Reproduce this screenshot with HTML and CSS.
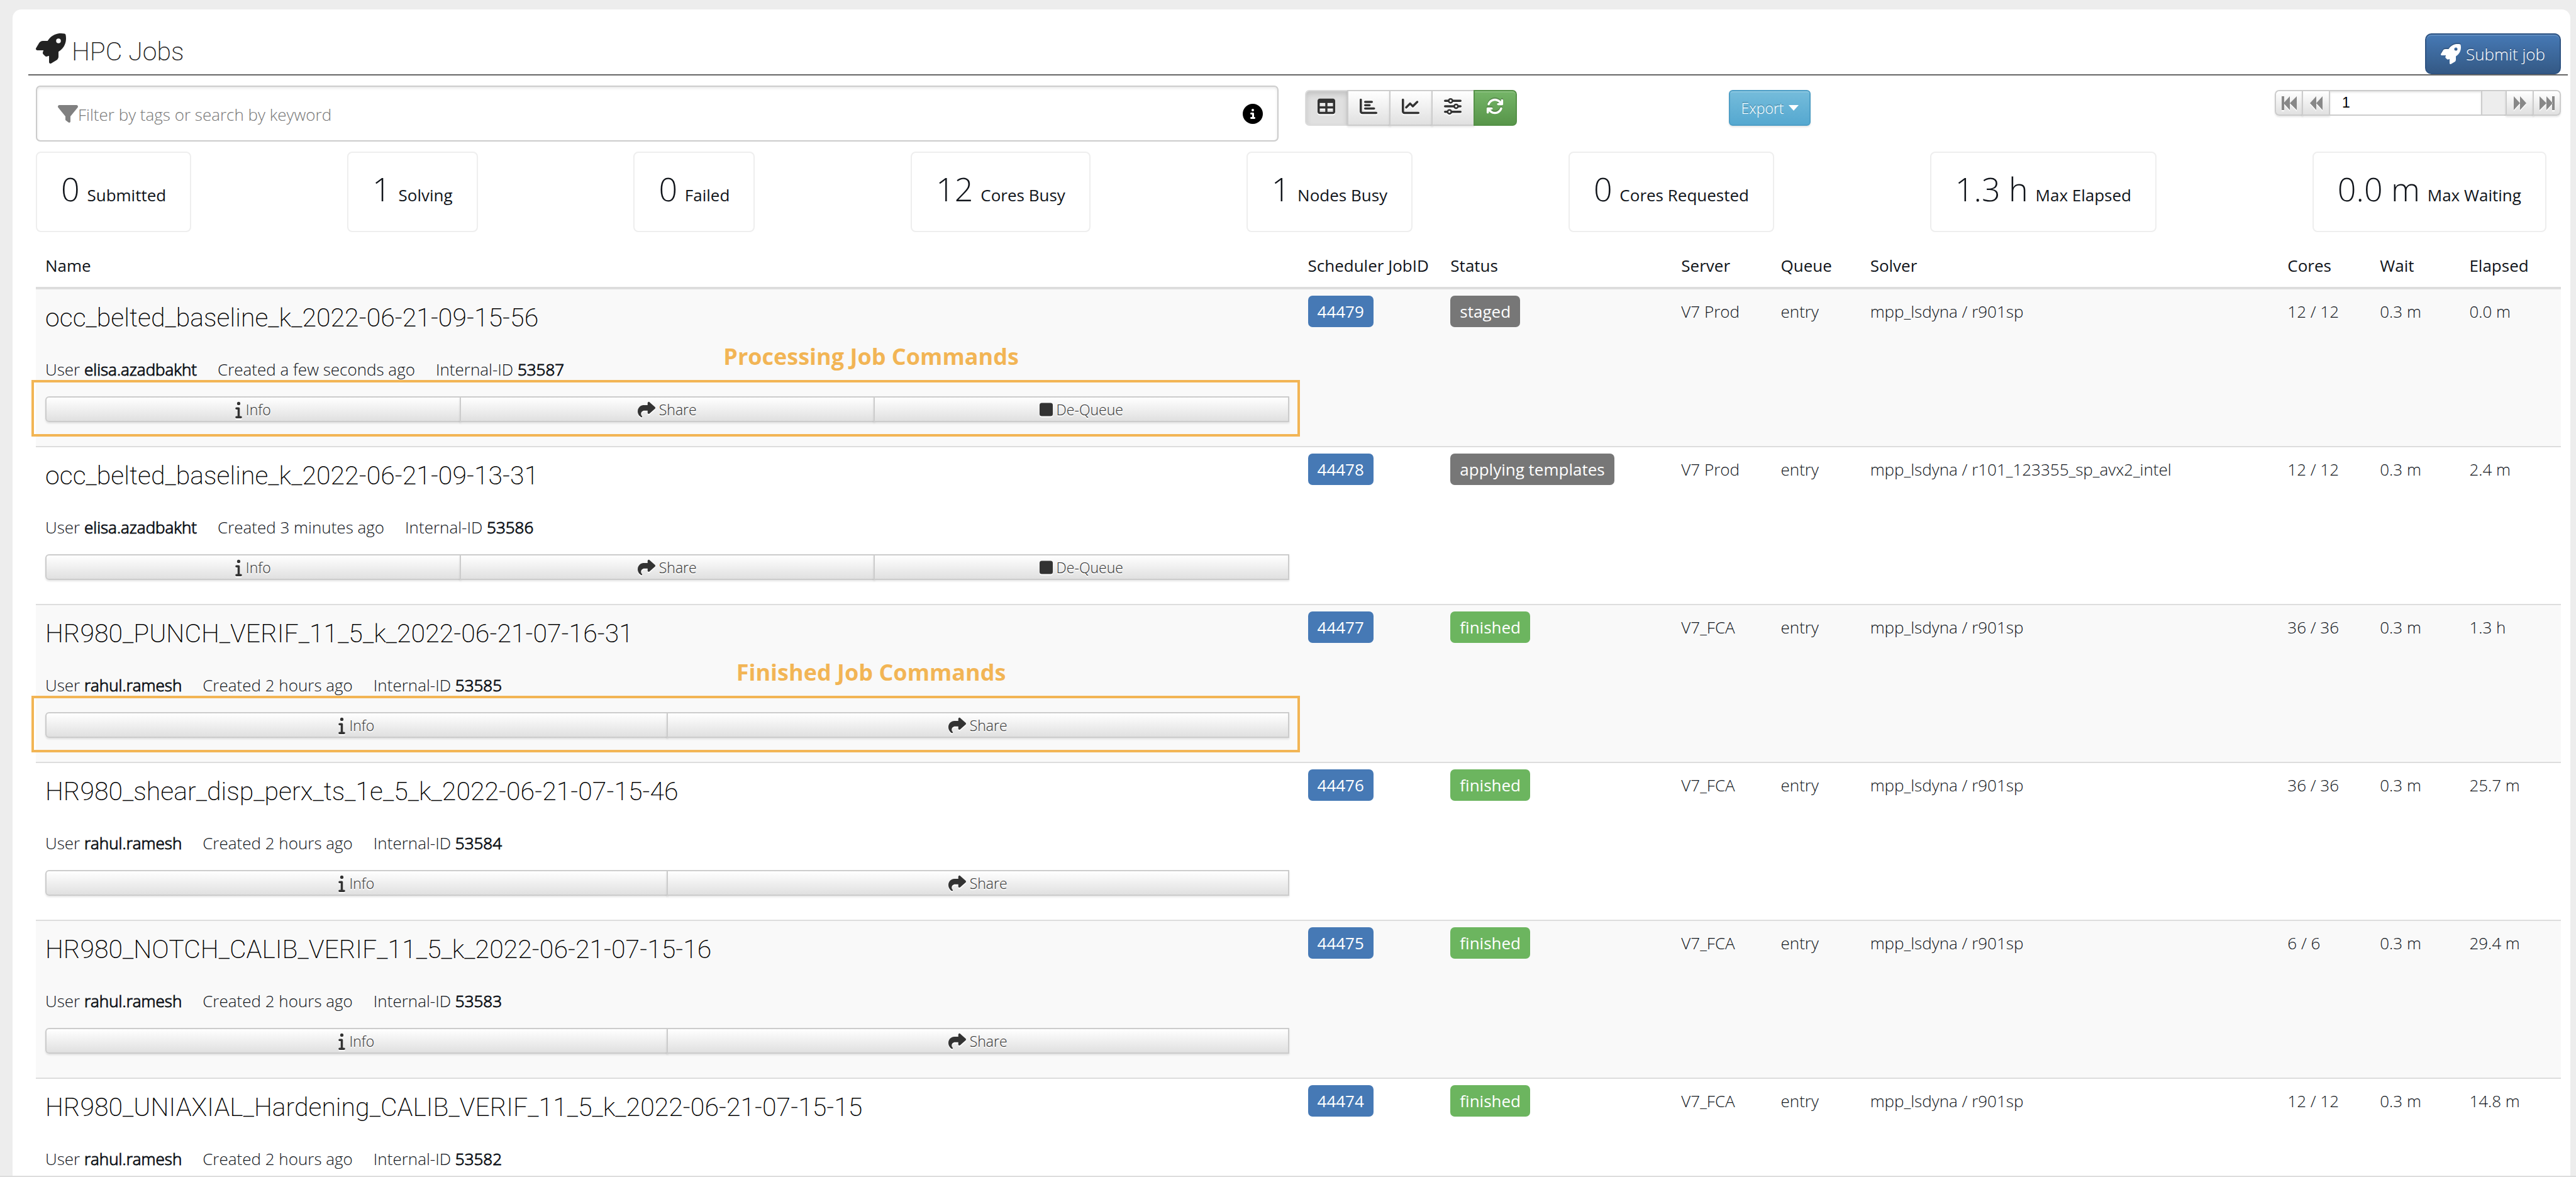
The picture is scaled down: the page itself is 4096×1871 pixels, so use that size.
FILE: index.html
```
<!DOCTYPE html>
<html lang="en">
<head>
  <meta charset="utf-8">
  <title>HPC Jobs</title>
  <link rel="stylesheet" href="styles.css">
</head>
<body>
  <!-- icon sprite -->
  <svg class="sprite" aria-hidden="true">
    <symbol id="rocket" viewBox="0 0 512 512"><path d="M156.600 384.900L125.700 354c-8.500-8.500-11.500-20.800-7.700-32.200c3-8.900 7-20.500 11.800-33.800L24 288c-8.600 0-16.600-4.600-20.900-12.100s-4.200-16.700 .2-24.100l52.500-88.500c13-21.900 36.500-35.300 61.900-35.300l82.300 0c2.400-4 4.800-7.700 7.200-11.300C289.100-4.100 411.100-8.100 483.900 5.300c11.600 2.100 20.600 11.200 22.800 22.800c13.400 72.900 9.300 194.800-111.400 276.700c-3.500 2.400-7.300 4.800-11.300 7.200v82.300c0 25.400-13.400 49-35.300 61.900l-88.500 52.500c-7.400 4.400-16.600 4.500-24.100 .2s-12.100-12.200-12.100-20.900V380.800c-14.100 4.900-26.400 8.900-35.700 11.900c-11.200 3.600-23.400 .5-31.800-7.800zM384 168a40 40 0 1 0 0-80 40 40 0 1 0 0 80z"/></symbol>
    <symbol id="filter" viewBox="0 0 512 512"><path d="M3.900 54.900C10.500 40.900 24.500 32 40 32H472c15.500 0 29.500 8.900 36.100 22.900s4.600 30.500-5.200 42.500L320 320.900V448c0 12.100-6.800 23.200-17.700 28.600s-23.800 4.300-33.500-3l-64-48c-8.100-6-12.800-15.500-12.800-25.600V320.900L9 97.300C-.7 85.400-2.800 68.800 3.900 54.900z"/></symbol>
    <symbol id="circle-info" viewBox="0 0 512 512"><path d="M256 512A256 256 0 1 0 256 0a256 256 0 1 0 0 512zM216 336h24V272H216c-13.300 0-24-10.700-24-24s10.700-24 24-24h48c13.300 0 24 10.700 24 24v88h8c13.300 0 24 10.700 24 24s-10.700 24-24 24H216c-13.300 0-24-10.700-24-24s10.700-24 24-24zm40-208a32 32 0 1 1 0 64 32 32 0 1 1 0-64z"/></symbol>
    <symbol id="table" viewBox="0 0 512 512"><path d="M64 256V160H224v96H64zm0 64H224v96H64V320zm224 96V320H448v96H288zM448 256H288V160H448v96zM64 32C28.700 32 0 60.700 0 96V416c0 35.300 28.700 64 64 64H448c35.300 0 64-28.700 64-64V96c0-35.300-28.700-64-64-64H64z"/></symbol>
    <symbol id="chart-bar" viewBox="0 0 512 512"><path d="M32 32c17.700 0 32 14.300 32 32V400c0 8.800 7.200 16 16 16H480c17.700 0 32 14.300 32 32s-14.300 32-32 32H80c-44.200 0-80-35.800-80-80V64C0 46.300 14.300 32 32 32zm96 96c0-17.700 14.300-32 32-32l192 0c17.700 0 32 14.300 32 32s-14.300 32-32 32H160c-17.700 0-32-14.300-32-32zm32 64H288c17.700 0 32 14.300 32 32s-14.300 32-32 32H160c-17.700 0-32-14.300-32-32s14.300-32 32-32zm0 96H416c17.700 0 32 14.300 32 32s-14.300 32-32 32H160c-17.700 0-32-14.300-32-32s14.300-32 32-32z"/></symbol>
    <symbol id="chart-line" viewBox="0 0 512 512"><path d="M64 64c0-17.700-14.300-32-32-32S0 46.300 0 64V400c0 44.200 35.800 80 80 80H480c17.700 0 32-14.300 32-32s-14.300-32-32-32H80c-8.800 0-16-7.200-16-16V64zm406.600 86.600c12.500-12.500 12.500-32.800 0-45.300s-32.800-12.500-45.300 0L320 210.700l-57.400-57.400c-12.500-12.500-32.800-12.500-45.300 0l-112 112c-12.500 12.500-12.500 32.800 0 45.300s32.800 12.500 45.300 0L240 221.300l57.400 57.400c12.500 12.500 32.800 12.500 45.300 0l128-128z"/></symbol>
    <symbol id="sliders" viewBox="0 0 512 512"><path d="M32 96H130M254 96H480M32 256H290M414 256H480M32 416H98M222 416H480" fill="none" stroke="currentColor" stroke-width="64" stroke-linecap="round"/><g fill="none" stroke="currentColor" stroke-width="48"><circle cx="192" cy="96" r="56"/><circle cx="352" cy="256" r="56"/><circle cx="160" cy="416" r="56"/></g></symbol>
    <symbol id="refresh" viewBox="0 0 512 512"><path d="M105.100 202.600c7.700-21.800 20.200-42.300 37.800-59.800c62.500-62.500 163.800-62.500 226.300 0L386.300 160H352c-17.700 0-32 14.300-32 32s14.300 32 32 32H463.900c17.700 0 32-14.300 32-32V80c0-17.700-14.300-32-32-32s-32 14.300-32 32v35.200L414.400 97.600c-87.500-87.500-229.300-87.500-316.800 0C73.200 122 55.600 150.700 44.800 181.400c-5.900 16.700 2.900 34.900 19.500 40.800s34.900-2.900 40.800-19.500zM39 289.300c-5 1.500-9.800 4.200-13.700 8.200c-4 4-6.700 8.800-8.100 14c-.3 1.200-.6 2.500-.8 3.800c-.3 1.700-.4 3.400-.4 5.100V432c0 17.700 14.300 32 32 32s32-14.300 32-32V396.900l17.600 17.500c87.500 87.400 229.300 87.400 316.700 0c24.400-24.400 42.100-53.100 52.900-83.700c5.900-16.700-2.900-34.900-19.500-40.800s-34.900 2.900-40.800 19.500c-7.700 21.800-20.200 42.300-37.800 59.800c-62.500 62.500-163.800 62.500-226.300 0L125.600 352H160c17.700 0 32-14.300 32-32s-14.300-32-32-32H48.400c-1.600 0-3.200 .1-4.800 .3s-3.100 .5-4.600 1z"/></symbol>
    <symbol id="caret" viewBox="0 0 16 10"><path d="M0 0H16L8 9z"/></symbol>
    <symbol id="first" viewBox="0 0 24 24"><path d="M0 1h4v22H0zM13 1v22L3 12zM24 1v22L13 12z"/></symbol>
    <symbol id="prev" viewBox="0 0 24 24"><path d="M12 1v22L2 12zM22 1v22L12 12z"/></symbol>
    <symbol id="next" viewBox="0 0 24 24"><path d="M2 1v22L12 12zM12 1v22L22 12z"/></symbol>
    <symbol id="last" viewBox="0 0 24 24"><path d="M20 1h4v22h-4zM11 1v22L21 12zM0 1v22L11 12z"/></symbol>
    <symbol id="info" viewBox="0 0 192 512"><path d="M48 80a48 48 0 1 1 96 0A48 48 0 1 1 48 80zM0 224c0-17.700 14.300-32 32-32H96c17.700 0 32 14.300 32 32V448h32c17.700 0 32 14.300 32 32s-14.300 32-32 32H32c-17.700 0-32-14.300-32-32s14.300-32 32-32H64V256H32c-17.700 0-32-14.300-32-32z"/></symbol>
    <symbol id="share" viewBox="0 0 512 512"><path d="M307 34.800c-11.500 5.100-19 16.600-19 29.200v64H176C78.800 128 0 206.800 0 304C0 417.300 81.500 467.900 100.200 478.100c2.500 1.400 5.300 1.900 8.100 1.900c10.900 0 19.700-8.900 19.700-19.700c0-7.500-4.300-14.400-9.800-19.500C108.800 431.900 96 414.400 96 384c0-53 43-96 96-96h96v64c0 12.600 7.400 24.100 19 29.200s25 3 34.400-5.400l160-144c6.700-6.100 10.600-14.700 10.600-23.800s-3.800-17.700-10.600-23.800l-160-144c-9.400-8.500-22.900-10.600-34.400-5.400z"/></symbol>
    <symbol id="stop" viewBox="0 0 384 512"><rect y="64" width="384" height="384" rx="64"/></symbol>
  </svg>

  <div class="page">
    <div class="panel">
      <div class="header">
        <h1><svg class="icon icon-title"><use href="#rocket"/></svg>HPC Jobs</h1>
        <button class="btn btn-primary"><svg class="icon icon-lg"><use href="#rocket"/></svg>Submit job</button>
      </div>

      <div class="content">
        <div class="toolbar">
          <div class="search">
            <svg class="icon icon-filter"><use href="#filter"/></svg>
            <input type="text" class="search-input" placeholder="Filter by tags or search by keyword" aria-label="Filter by tags or search by keyword">
            <svg class="icon icon-lg"><use href="#circle-info"/></svg>
          </div>
          <div class="btn-group">
            <button class="btn btn-default active" aria-label="Table"><svg class="icon"><use href="#table"/></svg></button>
            <button class="btn btn-default" aria-label="Bar chart"><svg class="icon"><use href="#chart-bar"/></svg></button>
            <button class="btn btn-default" aria-label="Line chart"><svg class="icon"><use href="#chart-line"/></svg></button>
            <button class="btn btn-default" aria-label="Settings"><svg class="icon"><use href="#sliders"/></svg></button>
            <button class="btn btn-success" aria-label="Refresh"><svg class="icon"><use href="#refresh"/></svg></button>
          </div>
          <div class="export">
            <button class="btn btn-info">Export<svg class="icon icon-caret"><use href="#caret"/></svg></button>
          </div>
          <div class="pager">
            <button class="btn btn-default" aria-label="First page"><svg class="icon icon-page"><use href="#first"/></svg></button>
            <button class="btn btn-default" aria-label="Previous page"><svg class="icon icon-page"><use href="#prev"/></svg></button>
            <input type="text" class="page-input" value="1" aria-label="Page">
            <span class="page-addon"></span>
            <button class="btn btn-default" aria-label="Next page"><svg class="icon icon-page"><use href="#next"/></svg></button>
            <button class="btn btn-default" aria-label="Last page"><svg class="icon icon-page"><use href="#last"/></svg></button>
          </div>
        </div>

        <div class="stats">
          <div class="stat"><span class="stat-value">0</span> Submitted</div>
          <div class="stat"><span class="stat-value">1</span> Solving</div>
          <div class="stat"><span class="stat-value">0</span> Failed</div>
          <div class="stat"><span class="stat-value">12</span> Cores Busy</div>
          <div class="stat"><span class="stat-value">1</span> Nodes Busy</div>
          <div class="stat"><span class="stat-value">0</span> Cores Requested</div>
          <div class="stat"><span class="stat-value">1.3 h</span> Max Elapsed</div>
          <div class="stat"><span class="stat-value">0.0 m</span> Max Waiting</div>
        </div>

        <table class="jobs">
          <colgroup>
            <col class="col-name"><col class="col-id"><col class="col-status"><col class="col-server"><col class="col-queue"><col class="col-solver"><col class="col-cores"><col class="col-wait"><col class="col-elapsed">
          </colgroup>
          <thead>
            <tr>
              <th>Name</th>
              <th>Scheduler JobID</th>
              <th>Status</th>
              <th>Server</th>
              <th>Queue</th>
              <th>Solver</th>
              <th>Cores</th>
              <th>Wait</th>
              <th>Elapsed</th>
            </tr>
          </thead>
          <tbody>
            <tr>
              <td>
                <h2>occ_belted_baseline_k_2022-06-21-09-15-56</h2>
                <div class="meta"><span>User <b>elisa.azadbakht</b></span><span>Created a few seconds ago</span><span>Internal-ID <b>53587</b></span></div>
                <div class="actions">
                  <button class="btn btn-default"><svg class="icon icon-info"><use href="#info"/></svg>Info</button>
                  <button class="btn btn-default"><svg class="icon"><use href="#share"/></svg>Share</button>
                  <button class="btn btn-default"><svg class="icon icon-stop"><use href="#stop"/></svg>De-Queue</button>
                  <div class="note-box"></div>
                  <div class="note-label">Processing Job Commands</div>
                </div>
              </td>
              <td><span class="label label-primary">44479</span></td>
              <td><span class="label label-default">staged</span></td>
              <td>V7 Prod</td>
              <td>entry</td>
              <td>mpp_lsdyna / r901sp</td>
              <td>12 / 12</td>
              <td>0.3 m</td>
              <td>0.0 m</td>
            </tr>
            <tr>
              <td>
                <h2>occ_belted_baseline_k_2022-06-21-09-13-31</h2>
                <div class="meta"><span>User <b>elisa.azadbakht</b></span><span>Created 3 minutes ago</span><span>Internal-ID <b>53586</b></span></div>
                <div class="actions">
                  <button class="btn btn-default"><svg class="icon icon-info"><use href="#info"/></svg>Info</button>
                  <button class="btn btn-default"><svg class="icon"><use href="#share"/></svg>Share</button>
                  <button class="btn btn-default"><svg class="icon icon-stop"><use href="#stop"/></svg>De-Queue</button>
                </div>
              </td>
              <td><span class="label label-primary">44478</span></td>
              <td><span class="label label-default">applying templates</span></td>
              <td>V7 Prod</td>
              <td>entry</td>
              <td>mpp_lsdyna / r101_123355_sp_avx2_intel</td>
              <td>12 / 12</td>
              <td>0.3 m</td>
              <td>2.4 m</td>
            </tr>
            <tr>
              <td>
                <h2>HR980_PUNCH_VERIF_11_5_k_2022-06-21-07-16-31</h2>
                <div class="meta"><span>User <b>rahul.ramesh</b></span><span>Created 2 hours ago</span><span>Internal-ID <b>53585</b></span></div>
                <div class="actions">
                  <button class="btn btn-default"><svg class="icon icon-info"><use href="#info"/></svg>Info</button>
                  <button class="btn btn-default"><svg class="icon"><use href="#share"/></svg>Share</button>
                  <div class="note-box"></div>
                  <div class="note-label">Finished Job Commands</div>
                </div>
              </td>
              <td><span class="label label-primary">44477</span></td>
              <td><span class="label label-success">finished</span></td>
              <td>V7_FCA</td>
              <td>entry</td>
              <td>mpp_lsdyna / r901sp</td>
              <td>36 / 36</td>
              <td>0.3 m</td>
              <td>1.3 h</td>
            </tr>
            <tr>
              <td>
                <h2>HR980_shear_disp_perx_ts_1e_5_k_2022-06-21-07-15-46</h2>
                <div class="meta"><span>User <b>rahul.ramesh</b></span><span>Created 2 hours ago</span><span>Internal-ID <b>53584</b></span></div>
                <div class="actions">
                  <button class="btn btn-default"><svg class="icon icon-info"><use href="#info"/></svg>Info</button>
                  <button class="btn btn-default"><svg class="icon"><use href="#share"/></svg>Share</button>
                </div>
              </td>
              <td><span class="label label-primary">44476</span></td>
              <td><span class="label label-success">finished</span></td>
              <td>V7_FCA</td>
              <td>entry</td>
              <td>mpp_lsdyna / r901sp</td>
              <td>36 / 36</td>
              <td>0.3 m</td>
              <td>25.7 m</td>
            </tr>
            <tr>
              <td>
                <h2>HR980_NOTCH_CALIB_VERIF_11_5_k_2022-06-21-07-15-16</h2>
                <div class="meta"><span>User <b>rahul.ramesh</b></span><span>Created 2 hours ago</span><span>Internal-ID <b>53583</b></span></div>
                <div class="actions">
                  <button class="btn btn-default"><svg class="icon icon-info"><use href="#info"/></svg>Info</button>
                  <button class="btn btn-default"><svg class="icon"><use href="#share"/></svg>Share</button>
                </div>
              </td>
              <td><span class="label label-primary">44475</span></td>
              <td><span class="label label-success">finished</span></td>
              <td>V7_FCA</td>
              <td>entry</td>
              <td>mpp_lsdyna / r901sp</td>
              <td>6 / 6</td>
              <td>0.3 m</td>
              <td>29.4 m</td>
            </tr>
            <tr>
              <td>
                <h2>HR980_UNIAXIAL_Hardening_CALIB_VERIF_11_5_k_2022-06-21-07-15-15</h2>
                <div class="meta"><span>User <b>rahul.ramesh</b></span><span>Created 2 hours ago</span><span>Internal-ID <b>53582</b></span></div>
              </td>
              <td><span class="label label-primary">44474</span></td>
              <td><span class="label label-success">finished</span></td>
              <td>V7_FCA</td>
              <td>entry</td>
              <td>mpp_lsdyna / r901sp</td>
              <td>12 / 12</td>
              <td>0.3 m</td>
              <td>14.8 m</td>
            </tr>
          </tbody>
        </table>
      </div>
    </div>
  </div>
</body>
</html>
```
FILE: styles.css
```
* {
  box-sizing: border-box;
}
body {
  font-family: 'Open Sans', sans-serif;
  font-size: 26px;
  font-weight: 300;
  line-height: 50px;
  color: #10141a;
  background: #ededed;
  margin: 0;
}
h1, h2 {
  font-family: Roboto, sans-serif;
  font-size: 41px;
  font-weight: 200;
  margin: 0;
}
button, input {
  font-family: inherit;
  font-size: inherit;
  font-weight: inherit;
  margin: 0;
}
.sprite {
  display: none;
}
.page {
  height: 100vh;
  padding: 15px 9px 0 20px;
  border-bottom: 2px solid #ddd;
  overflow: hidden;
}
.panel {
  background: #fff;
  border-radius: 14px 14px 0 0;
  padding: 38px 4px 0 25px;
}

/* icons */
.icon {
  width: 28px;
  height: 28px;
  fill: currentColor;
  flex: none;
}
.icon-title {
  width: 48px;
  height: 48px;
}
.icon-lg {
  width: 32px;
  height: 32px;
}
.icon-filter {
  width: 32px;
  height: 32px;
  color: #808080;
}
.icon-caret {
  width: 16px;
  height: 10px;
}
.icon-page {
  width: 24px;
  height: 24px;
  color: #888;
}
.icon-info {
  width: 11px;
}
.icon-stop {
  width: 21px;
}

/* header */
.header {
  display: flex;
  justify-content: space-between;
  padding: 0 11px 0 12px;
  border-bottom: 2px solid #666;
}
h1 {
  display: flex;
  gap: 9px;
  line-height: 58px;
  color: #222;
}
.content {
  padding: 16px 11px 0 12px;
}

/* buttons */
.btn {
  display: flex;
  align-items: center;
  justify-content: center;
  border: 2px solid #ccc;
  padding: 0;
  cursor: pointer;
}
.btn-default {
  color: #333;
  background: linear-gradient(#fff, #e0e0e0);
  border-color: #ccc;
  box-shadow: 0 2px 3px rgba(0, 0, 0, 0.1);
  text-shadow: 0 2px 0 #fff;
}
.btn-default.active {
  background: #e0e0e0;
  border-color: #dbdbdb;
  box-shadow: inset 0 5px 9px rgba(0, 0, 0, 0.125);
}
.btn-default .icon {
  filter: drop-shadow(0 2px 0 #fff);
}
.btn-primary {
  height: 65px;
  gap: 8px;
  padding: 0 23px;
  color: #fff;
  background: linear-gradient(#4679b5, #345985);
  border-color: #2f5483;
  border-radius: 10px;
  box-shadow: inset 0 2px 0 rgba(255, 255, 255, 0.15);
  text-shadow: 0 -2px 0 rgba(0, 0, 0, 0.2);
}
.btn-success {
  color: #fff;
  background: linear-gradient(#75b568, #579549);
  border-color: #549147;
  box-shadow: inset 0 2px 0 rgba(255, 255, 255, 0.15);
}
.btn-info {
  height: 57px;
  width: 130px;
  gap: 7px;
  font-size: 23px;
  color: #fff;
  background: linear-gradient(#75bcdb, #55a8d0);
  border-color: #4f9fc6;
  border-radius: 6px;
  box-shadow: inset 0 2px 0 rgba(255, 255, 255, 0.15), 0 2px 3px rgba(0, 0, 0, 0.1);
  text-shadow: 0 -2px 0 rgba(0, 0, 0, 0.2);
}
.btn-primary .icon,
.btn-success .icon {
  filter: drop-shadow(0 -2px 0 rgba(0, 0, 0, 0.2));
}

/* toolbar */
.toolbar {
  display: grid;
  grid-template-columns: 50.25% 16.8% 1fr 455px;
  align-items: start;
}
.search {
  display: flex;
  align-items: center;
  height: 89px;
  margin-right: 42px;
  padding: 0 23px 0 33px;
  color: #000;
  border: 2px solid #ccc;
  border-radius: 7px;
  box-shadow: inset 0 2px 4px rgba(0, 0, 0, 0.1);
}
.search-input {
  flex: 1;
  border: none;
  outline: none;
  padding: 2px 0 0;
  background: none;
}
.search-input::placeholder {
  color: #777;
}
.btn-group,
.export,
.pager {
  display: flex;
  padding-top: 7px;
}
.btn-group .btn {
  width: 69px;
  height: 57px;
  padding-bottom: 6px;
}
.btn-group .btn + .btn,
.actions .btn + .btn {
  margin-left: -2px;
}
.btn-group .btn:first-child,
.pager .btn:first-child {
  border-radius: 7px 0 0 7px;
}
.btn-group .btn:last-child,
.pager .btn:last-child {
  border-radius: 0 7px 7px 0;
}
.pager .btn {
  width: 45px;
  height: 41px;
}
.pager .btn:nth-child(2),
.pager .btn:last-child {
  margin-left: -2px;
}
.page-input {
  flex: 1;
  min-width: 0;
  height: 41px;
  margin-left: -2px;
  padding: 0 19px;
  font-family: 'Liberation Sans', sans-serif;
  font-size: 23px;
  font-weight: 400;
  border: 2px solid #ccc;
  box-shadow: inset 0 2px 3px rgba(0, 0, 0, 0.1);
}
.page-addon {
  width: 37px;
  height: 41px;
  background: #ededed;
  border: solid #ccc;
  border-width: 2px 0;
}

/* counters */
.stats {
  display: flex;
  justify-content: space-between;
  margin: 16px 23px 0 0;
}
.stat {
  height: 128px;
  padding: 0 38px;
  line-height: 114px;
  font-weight: 400;
  border: 2px solid #eee;
  border-radius: 8px;
}
.stat-value {
  margin-right: 5px;
  font-size: 52px;
  font-weight: 300;
}

/* job list */
.jobs {
  width: 100%;
  table-layout: fixed;
  border-spacing: 0;
}
.col-name { width: 50%; }
.col-id { width: 5.65%; }
.col-status { width: 9.14%; }
.col-server { width: 3.94%; }
.col-queue { width: 3.54%; }
.col-solver { width: 16.53%; }
.col-cores { width: 3.66%; }
.col-wait { width: 3.54%; }
.col-elapsed { width: 4%; }
th {
  padding: 28px 0 9px 15px;
  font-weight: 400;
  text-align: left;
  white-space: nowrap;
  border-bottom: 2px solid #ddd;
}
td {
  padding: 10px 0 38px 15px;
  vertical-align: top;
  white-space: nowrap;
  border-top: 2px solid #ddd;
}
td:first-child {
  padding-right: 15px;
}
tbody tr:nth-child(odd) {
  background: #f9f9f9;
}
h2 {
  line-height: 70px;
  color: #000;
}
.meta {
  display: flex;
  gap: 33px;
  margin: 22px 0 18px;
}
.meta b {
  font-weight: 300;
  -webkit-text-stroke: 1px #10141a;
}
.actions {
  display: flex;
  position: relative;
  font-size: 23px;
}
.actions .btn {
  flex: 1;
  gap: 6px;
  height: 41px;
}
.actions .btn:first-child {
  border-radius: 6px 0 0 6px;
}
.label {
  display: inline-block;
  padding: 0 15px;
  font-weight: 400;
  color: #fff;
  border-radius: 7px;
}
.label-primary { background: #4679b5; }
.label-default { background: #777; }
.label-success { background: #6cb55f; }

/* callouts over the command bars */
.note-box {
  position: absolute;
  inset: -26px -17px -23px -22px;
  border: 4px solid #f2b555;
  pointer-events: none;
}
.note-label {
  position: absolute;
  left: 66.4%;
  bottom: 79px;
  transform: translateX(-50%);
  font-size: 36px;
  font-weight: 700;
  color: #f2b555;
}
```
